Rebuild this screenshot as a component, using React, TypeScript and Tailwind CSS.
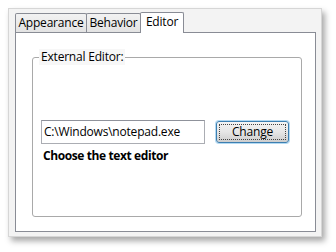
import React from 'react';

const tabs = [
  { label: 'Appearance', w: 'w-[72px]' },
  { label: 'Behavior', w: 'w-[55px]' },
  { label: 'Editor', w: 'w-[44px]' },
];

const App: React.FC = () => {
  const active = 'Editor';

  return (
    <div
      className="w-[336px] h-[252px] bg-white pt-[8px] pl-[8px] text-[12px] tracking-[-0.2px] text-black"
      style={{ fontFamily: '"Open Sans", "Noto Sans", sans-serif' }}
    >
      {/* Window */}
      <div className="w-[314px] h-[229px] bg-[#f3f3f3] border border-[#d6d6d6] pl-[6px] pt-[3px] shadow-[3px_4px_6px_rgba(0,0,0,0.35)]">
        {/* Tab strip */}
        <div className="flex items-end h-[20px]">
          {tabs.map((t) =>
            t.label === active ? (
              <div
                key={t.label}
                className={`${t.w} relative z-10 -ml-px h-[21px] -mb-px bg-white border border-b-0 border-[#898c95] rounded-t-[2px] flex justify-center items-start pt-[1px] leading-[16px]`}
              >
                {t.label}
              </div>
            ) : (
              <div
                key={t.label}
                className={`${t.w} h-[19px] -ml-px first:ml-0 bg-gradient-to-b from-[#f2f2f2] to-[#e3e3e3] border border-b-0 border-[#898c95] rounded-t-[2px] flex justify-center items-center leading-[16px]`}
              >
                {t.label}
              </div>
            )
          )}
        </div>

        {/* Tab panel */}
        <div className="w-[301px] h-[200px] bg-white border border-[#898c95] pl-[16px] pt-[16px]">
          <fieldset className="w-[270px] h-[168px] border border-[#a9a9a9] rounded-[3px] px-[8px] m-0">
            <legend className="-ml-[2px] px-[2px] leading-[16px] bg-[#f7f7f7]">External Editor:</legend>
            <div className="pt-[55px]">
              <div className="flex items-center gap-[11px]">
                <div className="w-[164px] h-[24px] border border-[#abadb3] border-t-[#8f929b] flex items-center pl-[2px] leading-[16px]">
                  C:\Windows\notepad.exe
                </div>
                <button className="w-[73px] h-[22px] rounded-[3px] border border-[#3c7fb1] bg-gradient-to-b from-[#f4f4f4] via-[#e6e6e6] to-[#cdcdcd] shadow-[0_0_0_1px_rgba(104,180,230,0.5)] p-[2px]">
                  <span className="flex items-center justify-center w-full h-full border border-dotted border-[#444] leading-[14px]">
                    Change
                  </span>
                </button>
              </div>
              <div className="mt-[4px] pl-[2px] font-bold tracking-[-0.4px] leading-[16px]">Choose the text editor</div>
            </div>
          </fieldset>
        </div>
      </div>
    </div>
  );
};

export default App;
